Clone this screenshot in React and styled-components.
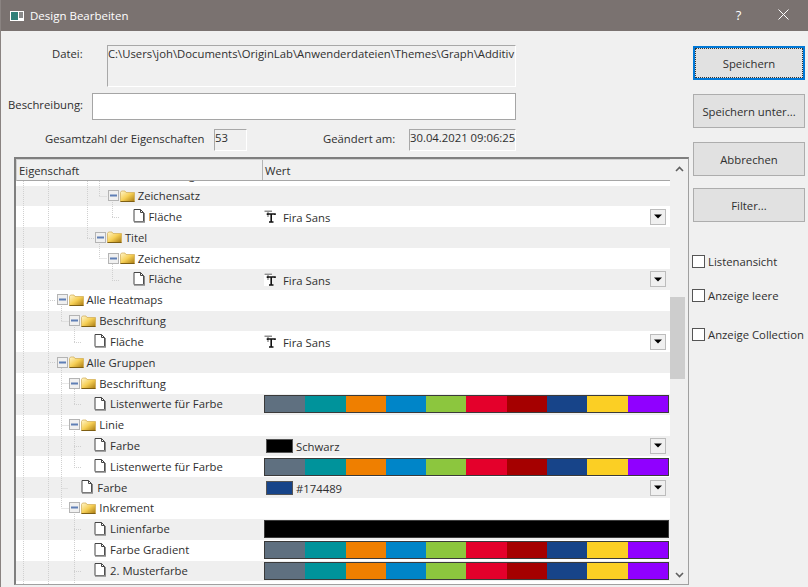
import React from 'react';
import styled, { createGlobalStyle } from 'styled-components';

const Global = createGlobalStyle`
  html, body { margin: 0; padding: 0; background: #f0f0f0; }
  body { font-family: "Open Sans", "Noto Sans", sans-serif; font-size: 11.3px; color: #2f2f2f; }
  * { box-sizing: border-box; }
`;

const Win = styled.div`
  width: 808px; height: 587px; overflow: hidden; display: flex; flex-direction: column;
  background: #f0f0f0; border-left: 1px solid #8a8381;
`;
const TitleBar = styled.div`
  height: 31px; flex: none; margin-left: -1px; background: #7a7270; color: #fff; display: flex; align-items: center;
  padding: 0 0 0 10px; font-size: 11.5px;
`;
const TitleText = styled.span` margin-left: 6px; flex: 1; `;
const TitleBtn = styled.div`
  width: 45px; height: 31px; padding-bottom: 2px; display: flex; align-items: center; justify-content: center; font-size: 13px; flex: none;
  margin-right: ${p => p.$mr || 0}px;
`;
const Body = styled.div` flex: 1; display: flex; min-height: 0; `;
const LeftCol = styled.div` width: 691px; flex: none; padding: 14px 0 0 13px; display: flex; flex-direction: column; `;
const RightCol = styled.div` flex: 1; min-width: 0; padding: 15px 0 0 1px; display: flex; flex-direction: column; `;

const FormRow = styled.div`
  display: flex; align-items: ${p => p.$top ? 'flex-start' : 'center'}; margin-top: ${p => p.$mt || 0}px; margin-left: ${p => p.$ml || 0}px;
  width: ${p => 502 - (p.$ml || 0)}px;
`;
const Label = styled.label`
  width: ${p => p.$w}px; flex: none; padding-top: ${p => p.$pt || 0}px; padding-bottom: ${p => p.$pb || 0}px; padding-left: ${p => p.$pl || 0}px;
`;
const Sunken = styled.div`
  height: ${p => p.$h}px; width: ${p => p.$w ? `${p.$w}px` : 'auto'}; flex: ${p => p.$w ? 'none' : 1}; min-width: 0; overflow: hidden; white-space: nowrap;
  border: 1px solid #fff; border-top-color: #a8a8a8; border-left-color: #a8a8a8; padding: 0;
`;
const TextInput = styled.div`
  flex: 1; height: 27px; background: #fff; border: 1px solid #a5a5a5;
`;
const Table = styled.div`
  margin-top: 6px; width: 675px; height: 428px; flex: none; display: flex;
  border-style: solid; border-color: #7f7f7f #a0a0a0 #a0a0a0 #7f7f7f; border-width: 2px 1px 1px 2px;
`;
const TableMain = styled.div` flex: 1; min-width: 0; display: flex; flex-direction: column; `;
const Head = styled.div`
  height: 22px; flex: none; display: grid; grid-template-columns: 245px 1fr; border-top: 1px solid #d0d0d0; border-bottom: 1px solid #a6a6a6;
  border-left: 1px solid #d0d0d0;
`;
const HeadCell = styled.div` padding: 3px 0 0 2px; & + & { border-left: 1px solid #b4b4b4; } `;
const TreeBody = styled.div` position: relative; flex: 1; overflow: hidden; min-height: 0; background: #fff; `;
const TreeLines = styled.svg` position: absolute; left: 0; top: 0; width: 654px; height: 404px; pointer-events: none; `;
const Row = styled.div`
  height: 20.83px; display: grid; grid-template-columns: 246px 1fr; background: ${p => p.$alt ? '#efefef' : '#fff'};
  &:first-child { margin-top: -16.2px; }
`;
const NameCell = styled.div`
  display: flex; align-items: center; white-space: nowrap; padding-left: ${p => 40.5 + 12.8 * p.$level}px; padding-bottom: 1px; min-width: 0; overflow: hidden;
`;
const ExpSlot = styled.span` width: 12px; flex: none; display: flex; align-items: center; `;
const IconSlot = styled.span` flex: none; display: flex; align-items: center; margin-right: ${p => p.$mr}px; `;
const ValueCell = styled.div` display: flex; align-items: center; min-width: 0; padding: 0 1px 0 2px; `;
const FontName = styled.span` margin-left: 7px; flex: 1; padding-top: 2px; `;
const ColorBox = styled.span`
  width: 27px; height: 14px; flex: none; margin-left: 2px; background: ${p => p.$c}; border: 1px solid #555;
`;
const ColorName = styled.span` margin-left: 3px; flex: 1; padding-top: 2px; `;
const DropBtn = styled.span`
  width: 16px; height: 16px; flex: none; margin-right: 3px; border: 1px solid #bcbcbc; background: #f0f0f0;
  display: flex; align-items: center; justify-content: center;
`;
const Bar = styled.div`
  flex: 1; height: 18px; display: flex; border: 1px solid #3a3a3a; background: ${p => p.$c || 'transparent'};
`;
const Seg = styled.span` flex: 1; background: ${p => p.$c}; `;
const Scrollbar = styled.div`
  width: 18px; flex: none; background: #f0f0f0; display: flex; flex-direction: column; align-items: center;
`;
const ScrollArrow = styled.div` height: 19px; flex: none; width: 100%; display: flex; align-items: center; justify-content: center; `;
const ScrollTrack = styled.div` flex: 1; width: 100%; padding-top: 119px; `;
const Thumb = styled.div` width: 15px; height: 82px; background: #cdcdcd; `;
const Btn = styled.button`
  width: 112px; height: 34px; flex: none; font: inherit; color: inherit; background: #e1e1e1; border: 1px solid #adadad; padding: 0;
  margin-top: ${p => p.$mt || 0}px;
  ${p => p.$primary && `border: 2px solid #0078d7; outline: 1px dotted #333; outline-offset: -3px;`}
`;
const Check = styled.div`
  display: flex; align-items: center; white-space: nowrap; height: 16px; margin-top: ${p => p.$mt}px; overflow: hidden; width: 113px; margin-left: -1px;
`;
const Box = styled.span` width: 13px; height: 13px; flex: none; background: #fff; border: 1px solid #555; margin-right: 3px; `;

const COLORS = ['#5f7080', '#00939b', '#ef7f00', '#0085c8', '#8cc63e', '#e4002b', '#a50000', '#174489', '#fbcf24', '#9000ff'];

const Expander = () => (
  <svg width="11" height="11" viewBox="0 0 11 11"><rect x=".5" y=".5" width="10" height="10" fill="#f0f0f0" stroke="#b4b4b4"/><rect x="2" y="4.5" width="7" height="2" fill="#5f7fb5"/></svg>
);
const Folder = () => (
  <svg width="15" height="12" viewBox="0 0 15 12">
    <defs><linearGradient id="fg" x1="0" y1="0" x2="1" y2="1"><stop offset="0" stopColor="#fff6cf"/><stop offset=".5" stopColor="#f6cf55"/><stop offset="1" stopColor="#a87a12"/></linearGradient></defs>
    <path d="M.5 2.5 L1.5 1 H5 L6 2.5 H14.5 V11.5 H.5Z" fill="url(#fg)" stroke="#d0ab50" strokeWidth=".7"/>
    <path d="M.5 11.5H14.5" stroke="#7e5f14"/>
  </svg>
);
const Doc = () => (
  <svg width="12" height="14" viewBox="0 0 12 14">
    <path d="M1 .5H7.5L10.5 3.5V12.5H1Z" fill="#fff" stroke="#454545"/>
    <path d="M7.5 .5V3.5H10.5" fill="none" stroke="#454545"/>
    <path d="M1 13H11.5V4" fill="none" stroke="#8a8a8a" strokeWidth="1.3"/>
  </svg>
);
const FontIcon = () => (
  <svg width="12" height="13" viewBox="0 0 12 13">
    <rect x="0" y="0" width="8" height="13" fill="#fff"/>
    <path d="M.5 1.2H8M4 1.2V7" stroke="#8f8f8f" strokeWidth="1.4" fill="none"/>
    <path d="M3.5 5V4H11V5M7.2 4V12M5 12H9.5" stroke="#111" strokeWidth="1.6" fill="none"/>
  </svg>
);
const Caret = () => <svg width="8" height="5" viewBox="0 0 8 5"><path d="M0 0.5H8L4 4.5Z" fill="#000"/></svg>;
const Chevron = ({ up }) => (
  <svg width="9" height="6" viewBox="0 0 9 6"><path d={up ? 'M1 5L4.5 1.5L8 5' : 'M1 1L4.5 4.5L8 1'} fill="none" stroke="#606060" strokeWidth="1.6"/></svg>
);

const V = [[23.5,181,585],[48.5,181,585],[61.5,306,321],[61.5,368,508],[74.5,327,342],[74.5,389,404],[74.5,431,467],[74.5,514,585],[87.5,181,238],[99.5,181,196],[99.5,244,258.5],[112.5,202,217],[112.5,264,280]];
const H = [[48,56,300.5],[48,56,362.5],[61.5,69,321.5],[61.5,69,383.5],[61.5,69,425.5],[61.5,68,488.5],[61.5,69,508.5],[74,82,342.5],[74,82,404.5],[74,82,446.5],[74,82,467.5],[74,82,529.5],[74,82,550.5],[74,82,571.5],[87,94,238.5],[99.5,107,196.5],[99.5,107,258.5],[112,120,217.5],[112,120,280.5]];

const ROWS = [
  { level: 5.6, name: 'Beschriftung', kind: 'plain' },
  { level: 4, name: 'Zeichensatz', kind: 'folder' },
  { level: 5, name: 'Fläche', kind: 'doc', font: true },
  { level: 3, name: 'Titel', kind: 'folder' },
  { level: 4, name: 'Zeichensatz', kind: 'folder' },
  { level: 5, name: 'Fläche', kind: 'doc', font: true },
  { level: 0, name: 'Alle Heatmaps', kind: 'folder' },
  { level: 1, name: 'Beschriftung', kind: 'folder' },
  { level: 2, name: 'Fläche', kind: 'doc', font: true },
  { level: 0, name: 'Alle Gruppen', kind: 'folder' },
  { level: 1, name: 'Beschriftung', kind: 'folder' },
  { level: 2, name: 'Listenwerte für Farbe', kind: 'doc', bar: true },
  { level: 1, name: 'Linie', kind: 'folder' },
  { level: 2, name: 'Farbe', kind: 'doc', color: ['#000000', 'Schwarz'] },
  { level: 2, name: 'Listenwerte für Farbe', kind: 'doc', bar: true },
  { level: 1, name: 'Farbe', kind: 'doc', color: ['#174489', '#174489'] },
  { level: 1, name: 'Inkrement', kind: 'folder' },
  { level: 2, name: 'Linienfarbe', kind: 'doc', solid: '#000' },
  { level: 2, name: 'Farbe Gradient', kind: 'doc', bar: true },
  { level: 2, name: '2. Musterfarbe', kind: 'doc', bar: true },
];

const TreeRow = ({ r, alt }) => (
  <Row $alt={alt}>
    <NameCell $level={r.level}>
      {r.kind !== 'plain' && <ExpSlot>{r.kind === 'folder' && <Expander />}</ExpSlot>}
      {r.kind === 'folder' && <IconSlot $mr={3}><Folder /></IconSlot>}
      {r.kind === 'doc' && <IconSlot $mr={4}><Doc /></IconSlot>}
      <span>{r.name}</span>
    </NameCell>
    <ValueCell>
      {r.font && <><FontIcon /><FontName>Fira Sans</FontName><DropBtn><Caret /></DropBtn></>}
      {r.color && <><ColorBox $c={r.color[0]} /><ColorName>{r.color[1]}</ColorName><DropBtn><Caret /></DropBtn></>}
      {r.bar && <Bar>{COLORS.map(c => <Seg key={c} $c={c} />)}</Bar>}
      {r.solid && <Bar $c={r.solid} />}
    </ValueCell>
  </Row>
);

export default function App() {
  return (
    <Win>
      <Global />
      <TitleBar>
        <svg width="14" height="10" viewBox="0 0 14 10"><rect width="14" height="10" fill="#fff"/><rect x="1" y="1" width="7" height="8" fill="#2f7f78"/><rect x="9" y="1" width="4" height="6" fill="#8a8a8a"/></svg>
        <TitleText>Design Bearbeiten</TitleText>
        <TitleBtn>?</TitleBtn>
        <TitleBtn $mr={2}>
          <svg width="11" height="11" viewBox="0 0 11 11"><path d="M.5.5L10.5 10.5M10.5.5L.5 10.5" stroke="#fff" strokeWidth="1"/></svg>
        </TitleBtn>
      </TitleBar>
      <Body>
        <LeftCol>
          <FormRow $top $ml={38}>
            <Label $w={55} $pt={1}>Datei:</Label>
            <Sunken $h={42}>C:\Users\joh\Documents\OriginLab\Anwenderdateien\Themes\Graph\Additiv</Sunken>
          </FormRow>
          <FormRow $mt={6} $ml={-6}>
            <Label $w={84} $pb={4}>Beschreibung:</Label>
            <TextInput />
          </FormRow>
          <FormRow $mt={9} $ml={31}>
            <Label $w={169} $pb={3}>Gesamtzahl der Eigenschaften</Label>
            <Sunken $h={22} $w={33}>53</Sunken>
            <Label $w={162} $pb={3} $pl={76}>Geändert am:</Label>
            <Sunken $h={22} $w={107}>30.04.2021 09:06:25</Sunken>
          </FormRow>
          <Table>
            <TableMain>
              <Head><HeadCell>Eigenschaft</HeadCell><HeadCell>Wert</HeadCell></Head>
              <TreeBody>
                {ROWS.map((r, i) => <TreeRow key={i} r={r} alt={i % 2 === 1} />)}
                <TreeLines viewBox="16 181 654 404">
                  <g stroke="#d0d0d0" strokeDasharray="1 1" fill="none">
                    {V.map(([x, a, b], i) => <line key={i} x1={x} x2={x} y1={a} y2={b} />)}
                    {H.map(([a, b, y], i) => <line key={i} x1={a} x2={b} y1={y} y2={y} />)}
                  </g>
                </TreeLines>
              </TreeBody>
            </TableMain>
            <Scrollbar>
              <ScrollArrow><Chevron up /></ScrollArrow>
              <ScrollTrack><Thumb /></ScrollTrack>
              <ScrollArrow><Chevron /></ScrollArrow>
            </Scrollbar>
          </Table>
        </LeftCol>
        <RightCol>
          <Btn $primary>Speichern</Btn>
          <Btn $mt={14}>Speichern unter...</Btn>
          <Btn $mt={14}>Abbrechen</Btn>
          <Btn $mt={12}>Filter...</Btn>
          <Check $mt={31}><Box />Listenansicht</Check>
          <Check $mt={18}><Box />Anzeige leere</Check>
          <Check $mt={23}><Box />Anzeige Collection</Check>
        </RightCol>
      </Body>
    </Win>
  );
}
